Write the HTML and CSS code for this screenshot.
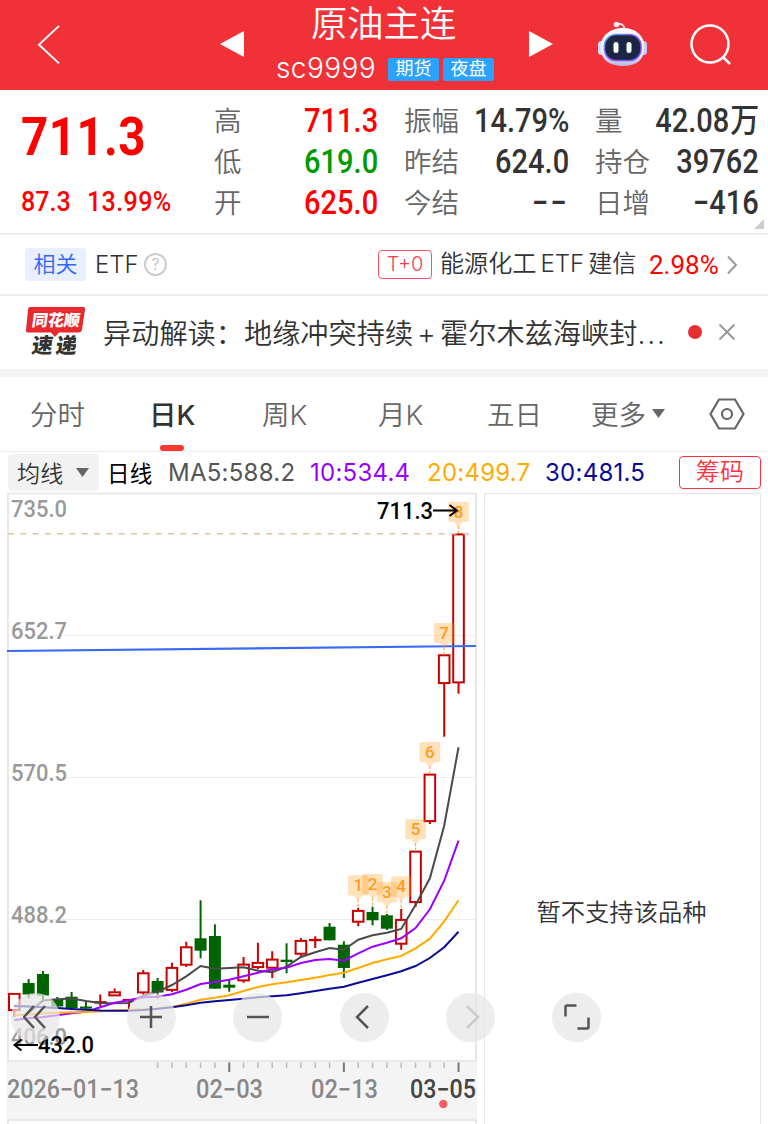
FILE: index.html
```html
<!DOCTYPE html>
<html lang="zh-CN">
<head>
<meta charset="utf-8">
<title>原油主连</title>
<link rel="stylesheet" href="styles.css">
</head>
<body>
<!-- top bar -->
<div class="header">
  <svg class="back" width="24" height="42" viewBox="0 0 24 42"><path d="M22 2 L2 21.500 L22 41" transform="scale(1 .96)"/></svg>
  <svg class="prev" width="24" height="26" viewBox="0 0 24 26"><path d="M0 13 L24 0 V26 Z"/></svg>
  <div class="title">
    <h1>原油主连</h1>
    <div class="code"><span class="sym">sc9999</span><span class="tag">期货</span><span class="tag">夜盘</span></div>
  </div>
  <svg class="next" width="24" height="26" viewBox="0 0 24 26"><path d="M0 0 L24 13 L0 26 Z"/></svg>
  <svg class="robot" width="50" height="46" viewBox="0 0 50 46">
    <defs>
      <linearGradient id="head" x1="0" y1="0" x2="0" y2="1"><stop offset="0" stop-color="#fff"/><stop offset=".7" stop-color="#e6e6f8"/><stop offset="1" stop-color="#b8b8e0"/></linearGradient>
      <linearGradient id="rim" x1="0" y1="0" x2="1" y2="1"><stop offset="0" stop-color="#55b8e8"/><stop offset=".5" stop-color="#8d4df0"/><stop offset="1" stop-color="#6a58ff"/></linearGradient>
    </defs>
    <path d="M18.500 3.500 C23 2 26 3.500 26.500 8" fill="none" stroke="#f3efff" stroke-width="1.800"/>
    <circle cx="18.500" cy="3.500" r="2.800" fill="#f4e6f0"/>
    <rect x="0" y="20" width="7" height="14" rx="3.500" fill="#dcdcf6"/>
    <rect x="42" y="20" width="7" height="14" rx="3.500" fill="#c9c9ee"/>
    <path d="M25 7 C38 7 46.500 15 46.500 26 C46.500 39 38 45 25 45 C12 45 2.500 39 2.500 26 C2.500 15 12 7 25 7 Z" fill="url(#head)"/>
    <rect x="6.500" y="13.500" width="36.500" height="26" rx="11.500" fill="#1d2544" stroke="url(#rim)" stroke-width="1.500"/>
    <rect x="15.500" y="21" width="5" height="11" rx="2.500" fill="#fff"/>
    <rect x="28.500" y="21" width="5" height="11" rx="2.500" fill="#fff"/>
  </svg>
  <svg class="search" width="42" height="42" viewBox="0 0 42 42"><circle cx="20" cy="20" r="18.500"/><path d="M33.500 33.500 L40 40"/></svg>
</div>

<!-- quote -->
<div class="quote">
  <div class="price">
    <div class="last"><span class="din">711.3</span></div>
    <div class="change"><span class="din">87.3</span><span class="din">13.99%</span></div>
  </div>
  <div class="stats">
    <div class="cell"><label>高</label><b class="din up">711.3</b></div>
    <div class="cell"><label>振幅</label><b class="din">14.79%</b></div>
    <div class="cell"><label>量</label><b class="din">42.08<i>万</i></b></div>
    <div class="cell"><label>低</label><b class="din down">619.0</b></div>
    <div class="cell"><label>昨结</label><b class="din">624.0</b></div>
    <div class="cell"><label>持仓</label><b class="din">39762</b></div>
    <div class="cell"><label>开</label><b class="din up">625.0</b></div>
    <div class="cell"><label>今结</label><b class="din dash">−−</b></div>
    <div class="cell"><label>日增</label><b class="din">−416</b></div>
  </div>
  <div class="corner"></div>
</div>

<!-- related ETF -->
<div class="etf">
  <span class="rel">相关</span>
  <span class="etf-label">ETF</span>
  <span class="help">?</span>
  <span class="t0">T+0</span>
  <span class="etf-name">能源化工<em>ETF</em>建信</span>
  <span class="etf-pct">2.98%</span>
  <svg width="12" height="20" viewBox="0 0 12 20"><path d="M2 1.500 L10 10 L2 18.500"/></svg>
</div>

<!-- news strip -->
<div class="news">
  <div class="logo">
    <svg width="62" height="32" viewBox="0 0 62 32"><path d="M5 1 H58 Q60.500 1 60 3.500 L57 23.500 Q56.500 26.500 53.500 26.500 H34 L30 31 L26 26.500 H3 Q.5 26.500 1 24 L3 3.500 Q3.300 1 5 1 Z"/></svg>
    <span class="logo-top">同花顺</span>
    <span class="logo-sub">速递</span>
  </div>
  <span class="news-text">异动解读：地缘冲突持续<em>+</em>霍尔木兹海峡封<u>...</u></span>
  <span class="dot"></span>
  <svg class="x" width="18" height="18" viewBox="0 0 18 18"><path d="M1.500 1.500 L16.500 16.500 M16.500 1.500 L1.500 16.500"/></svg>
</div>

<div class="tabs">
  <span>分时</span>
  <span class="active">日K</span>
  <span>周K</span>
  <span>月K</span>
  <span>五日</span>
  <span>更多<svg width="13" height="10" viewBox="0 0 13 10"><path d="M0 0 H13 L6.500 9 Z"/></svg></span>
  <svg class="gear" width="36" height="32" viewBox="0 0 36 32"><path d="M10 1.500 H26 L34.500 16 L26 30.500 H10 L1.500 16 Z"/><circle cx="18" cy="16" r="5"/></svg>
</div>

<div class="ma">
  <span class="pick">均线<svg width="13" height="9" viewBox="0 0 13 9"><path d="M0 0 H13 L6.500 9 Z"/></svg></span>
  <span class="day">日线</span>
  <span class="m5">MA5:588.2</span>
  <span class="m10">10:534.4</span>
  <span class="m20">20:499.7</span>
  <span class="m30">30:481.5</span>
  <span class="chip">筹码</span>
</div>

<div class="main">
  <svg id="chart" width="484" height="632" viewBox="0 492 484 632"></svg>
  <div class="side">暂不支持该品种</div>
  <div class="tools">
    <span><svg width="24" height="24" viewBox="0 0 24 24"><path d="M11 1 L1 12 L11 23 M22 1 L12 12 L22 23"/></svg></span>
    <span><svg width="24" height="24" viewBox="0 0 24 24"><path d="M1 12 H23 M12 1 V23"/></svg></span>
    <span><svg width="24" height="24" viewBox="0 0 24 24"><path d="M1 12 H23"/></svg></span>
    <span><svg width="24" height="24" viewBox="0 0 24 24"><path d="M16 1 L5 12 L16 23"/></svg></span>
    <span class="off"><svg width="24" height="24" viewBox="0 0 24 24"><path d="M8 1 L19 12 L8 23"/></svg></span>
    <span><svg width="26" height="26" viewBox="0 0 26 26"><path d="M1.500 12.500 V3 Q1.500 1.500 3 1.500 H12.500 M24.500 13.500 V23 Q24.500 24.500 23 24.500 H13.500"/></svg></span>
  </div>
</div>

<script>
var svg = document.getElementById("chart");
var out = "";
function px(i) { return 14.3 + i * 14.33; }

// color, high, body top, body bottom, low
var k = [
  ["r",993,993.3,1010.7,1016.7],["g",979,983,994.5,998],["g",971,974,995.5,1001.5],["g",997,999,1006.5,1008],
  ["g",992,996.7,1008,1008],["g",1001,1006.5,1008.7,1009.7],["r",994.5,1001.5,1003,1006.5],["r",988.5,991.7,996,996],
  ["r",999,999.3,1001,1011],["r",970,972.7,993,994.5],["g",978,981,992.5,998.5],["r",962.7,967.3,990.5,992],
  ["r",941.7,946.7,965.3,967],["g",900.3,938.3,950.7,958.3],["g",924.3,936,988.7,988.7],["g",979.3,984.7,987.7,991.7],
  ["r",957,964,981,982.7],["r",942.7,962.3,967.7,969.3],["r",951.3,959,968.3,978],["g",943.3,959.7,962,973.3],
  ["r",938,940.3,954.3,957.7],["r",936.3,939.3,940.7,948],["g",923,926.7,940.3,940.3],["g",941.3,944.7,968,978],
  ["r",907.7,910.3,922.3,926.3],["g",906.7,912,920.3,925.3],["g",914,915.3,928.7,930],["r",909,919.3,944.3,949.7],
  ["r",851,851,902.7,907],["r",774,774,821.7,824],["r",654.7,654.7,683.7,736.7],["r",533.3,533.8,683,693.7]
];
var ma = [
  ["#4a4a4a", [null,1013,1000.5,999.3,998.5,1001,1003,1003.3,1003,995.7,991.7,985,976.3,966,968.7,968,967.3,970.7,972.3,966.7,957,952.3,948,949.7,939.7,935.3,932.7,929,905,878.3,825.7,747.3]],
  ["#9b00ff", [1020,1018.3,1017,1015.3,1013.3,1011.7,1007.3,1002.7,1000.3,997.3,996.7,994.3,989.7,984,982,979.7,976.3,972.7,969.3,967.7,963,960,959,960.7,953.3,946.7,942.7,938.3,928,909.3,880.7,840.7]],
  ["#ffab00", [1015.3,1014.5,1013.5,1012.7,1012.3,1012,1011.3,1010.6,1010,1009.5,1008.7,1007,1003.7,999.7,997.7,995.3,991,987,984.3,982.3,980,977.7,975,972.7,968,963,959.3,956,948.3,938.7,921.3,900.3]],
  ["#0a0a96", [1006,1006.5,1007.3,1008,1009,1009.7,1010.5,1010.7,1010.7,1010,1008.7,1007.3,1005.3,1002.7,1001.3,1000,998.7,997.3,996.3,995.3,993.3,991,988.7,986.7,982.7,979,975.3,971.3,966,958,947.3,931.7]]
];
// label, candle index, top of the flag
var flags = [["1",24,875.3],["2",25,874],["3",26,882],["4",27,876.3],["5",28,819],["6",29,742],["7",30,623],["8",31,501.7]];

// frame, grid and date axis
out += '<rect class="axis" x="7" y="1062" width="470" height="57"/>';
out += '<path class="grid" d="M8 635.500 H476 M8 777.500 H476 M8 919.500 H476"/>';
out += '<path class="frame" d="M8 493.500 H476 V1061 H8 Z M7 1120 H476 V1124 M8 1120 V1124"/>';

function label(t, x, y, w, cls) {
  out += '<text class="' + cls + '" x="' + x + '" y="' + y + '" textLength="' + w + '" lengthAdjust="spacingAndGlyphs">' + t + '</text>';
}
label("735.0", 11, 517, 56, "lab");
label("652.7", 11, 639, 56, "lab");
label("570.5", 11, 781, 56, "lab");
label("488.2", 11, 923, 56, "lab");
label("406.0", 11, 1045, 56, "lab");

k.forEach(function (c, i) {
  var x = px(i), h = c[3] - c[2];
  if (c[0] == "g") {
    out += '<rect class="g" x="' + (x - 6) + '" y="' + c[2] + '" width="12" height="' + h + '"/>';
    out += '<path class="gw" d="M' + x + ' ' + c[1] + ' V' + c[4] + '"/>';
  } else {
    out += '<path class="rw" d="M' + x + ' ' + c[1] + ' V' + c[2] + ' M' + x + ' ' + c[3] + ' V' + c[4] + '"/>';
    out += '<rect class="r" x="' + (x - 5.3) + '" y="' + (c[2] + .6) + '" width="10.600" height="' + Math.max(h - 1.2, .3) + '"/>';
  }
});
ma.forEach(function (m) {
  var p = "";
  m[1].forEach(function (y, i) { if (y !== null) p += px(i) + "," + y + " "; });
  out += '<polyline class="line" stroke="' + m[0] + '" points="' + p + '"/>';
});

out += '<path class="last-line" d="M8 533.800 H476"/>';
out += '<path class="trend" d="M7 651 L476 646"/>';
flags.forEach(function (f) {
  var x = px(f[1]), y = f[2];
  out += '<path class="flag" d="M' + (x - 8.3) + ' ' + y + ' h16.600 q2 0 2 2 v16.200 q0 2 -2 2 h-3.800 l-4.500 5 l-4.500 -5 h-3.800 q-2 0 -2 -2 v-16.200 q0 -2 2 -2 z"/>';
  out += '<path class="flag-tail" d="M' + x + ' ' + (y + 24) + ' v8"/>';
  out += '<text class="flag-no" x="' + x + '" y="' + (y + 16) + '">' + f[0] + '</text>';
});

label("711.3", 377, 519, 56, "mark");
out += '<path class="arrow" d="M433 510.500 H457 M449.500 505 L457 510.500 L449.500 516"/>';
label("432.0", 38, 1053, 56, "mark");
out += '<path class="arrow" d="M38 1045 H15 M21.500 1039.500 L14.500 1045 L21.500 1050.500"/>';

for (var i = 10; i < 32; i++) {
  var major = i == 15 || i == 23 || i == 31;
  out += '<path class="' + (major ? "tick major" : "tick") + '" d="M' + px(i) + ' 1062.500 v' + (major ? 9.5 : 5.5) + '"/>';
}
label("2026−01−13", 7, 1098, 132, "lab date");
label("02−03", 196, 1098, 67, "lab date");
label("02−13", 311, 1098, 67, "lab date");
label("03−05", 410, 1098, 66, "lab date now");
out += '<circle cx="443.300" cy="1104" r="4.200" fill="#f35f63"/>';
svg.innerHTML = out;
</script>
</body>
</html>
```
FILE: styles.css
```css
* {
  box-sizing: border-box;
}

body {
  margin: 0;
  width: 768px;
  height: 1124px;
  overflow: hidden;
  background: #fff;
  color: #333;
  font-family: Inter, "Noto Sans CJK SC", sans-serif;
}

svg {
  display: block;
  fill: none;
  flex: none;
}

em, i, u {
  font-style: normal;
  text-decoration: none;
}

/* header */
.header {
  height: 90px;
  background: #f03238;
  display: flex;
  align-items: center;
  color: #fff;
}
.back {
  margin-left: 37px;
  stroke: #fff;
  stroke-width: 2;
}
.prev, .next {
  fill: #fff;
  margin-bottom: 3px;
}
.prev {
  margin-left: 159px;
}
.next {
  margin-left: 35px;
}
.title {
  width: 217px;
  height: 90px;
  margin-left: 33px;
}
h1 {
  margin: 0 0 0 34px;
  font-size: 36.300px;
  line-height: 48px;
  font-weight: 350;
  white-space: nowrap;
}
.code {
  display: flex;
  align-items: center;
  height: 42px;
}
.sym {
  font-size: 28px;
  font-weight: 350;
  letter-spacing: .4px;
  line-height: 38px;
  margin: -2px 0 0 -1px;
  width: 111px;
  flex: none;
}
.tag {
  width: 51px;
  height: 23px;
  margin-right: 4px;
  border-radius: 2px;
  background: #2ba2ff;
  font-size: 18px;
  line-height: 22px;
  text-align: center;
  flex: none;
}
.code .tag:nth-child(2) {
  margin-left: 1px;
}
.robot {
  margin-left: 45px;
  margin-bottom: 3px;
}
.search {
  margin-left: 42px;
  stroke: #fff;
  stroke-width: 2.500;
}

/* quote */
.din {
  display: inline-block;
  font-family: Roboto, "Noto Sans CJK SC", sans-serif;
  font-weight: 500;
  transform: scaleX(.88);
  transform-origin: right;
  white-space: nowrap;
}
.quote {
  height: 145px;
  border-bottom: 2px solid #eee;
  display: flex;
  position: relative;
}
.price {
  width: 214px;
  padding: 14px 0 0 21px;
  color: #f00;
}
.price .din {
  transform-origin: left;
}
.last {
  font-size: 54px;
  line-height: 64px;
}
.last .din {
  font-weight: 700;
  letter-spacing: .5px;
}
.change {
  display: flex;
  font-size: 28.500px;
  line-height: 33px;
  margin-top: 16px;
}
.change .din:first-child {
  width: 66px;
}
.change .din:last-child {
  letter-spacing: .4px;
}
.stats {
  display: grid;
  grid-template-columns: 164px 165px 164px;
  grid-auto-rows: 41px;
  column-gap: 26px;
  padding-top: 11px;
}
.cell {
  display: flex;
  justify-content: space-between;
  align-items: center;
  font-size: 33px;
  line-height: 41px;
}
.cell label {
  font-size: 27.500px;
  color: #666;
  font-weight: 350;
  white-space: nowrap;
}
.cell b {
  margin-top: -2px;
}
.cell i {
  font-size: 33px;
  display: inline-block;
  line-height: 30px;
  margin-left: 1px;
}
.cell .dash {
  letter-spacing: 2.500px;
}
.up {
  color: #f00;
}
.down {
  color: #090;
}
.corner {
  position: absolute;
  right: 4px;
  bottom: 4px;
  border-left: 10px solid transparent;
  border-bottom: 10px solid #ccc;
}

/* etf */
.etf {
  height: 61px;
  border-bottom: 2px solid #eee;
  display: flex;
  align-items: center;
  padding-left: 25px;
  font-weight: 350;
}
.rel {
  width: 61px;
  height: 33px;
  border-radius: 4px;
  background: #e8efff;
  color: #36f;
  font-size: 22px;
  line-height: 32px;
  text-align: center;
}
.etf-label {
  margin-left: 9px;
  width: 49px;
  font-size: 24px;
}
.help {
  width: 23px;
  height: 23px;
  border: 2px solid #ccc;
  border-radius: 50%;
  color: #bbb;
  font-size: 16px;
  line-height: 19px;
  text-align: center;
}
.t0 {
  width: 54px;
  height: 29px;
  margin-left: 211px;
  border: 1px solid #fa5064;
  border-radius: 4px;
  color: #f73c52;
  font-size: 20px;
  line-height: 27px;
  text-align: center;
}
.etf-name {
  width: 209px;
  margin-left: 8px;
  font-size: 24.100px;
  line-height: 34px;
  margin-top: -2px;
  white-space: nowrap;
}
.etf-name em {
  margin: 0 4px;
}
.etf-pct {
  width: 77px;
  color: #f00;
  font-family: Roboto, sans-serif;
  font-weight: 400;
  font-size: 26px;
}
.etf svg {
  stroke: #999;
  stroke-width: 2;
}

/* news */
.news {
  height: 81px;
  border-bottom: 8px solid #f4f4f4;
  display: flex;
  align-items: center;
}
.logo {
  position: relative;
  width: 62px;
  height: 54px;
  margin: 0 16px 0 25px;
  font-weight: 900;
}
.logo svg {
  fill: #e8292e;
}
.logo-top, .logo-sub {
  position: absolute;
  transform: skewX(-8deg);
  white-space: nowrap;
}
.logo-top {
  left: 7px;
  top: 2px;
  font-size: 16px;
  line-height: 24px;
  color: #fff;
}
.logo-sub {
  left: 7px;
  top: 28px;
  font-size: 21px;
  line-height: 24px;
  letter-spacing: 3px;
}
.news-text {
  width: 585px;
  margin-top: -2px;
  font-size: 28.200px;
  font-weight: 350;
  white-space: nowrap;
}
.news-text em {
  display: inline-block;
  width: 27px;
  text-align: center;
}
.news-text u {
  letter-spacing: 1.800px;
}
.dot {
  width: 14px;
  height: 14px;
  border-radius: 50%;
  background: #e83034;
  margin-top: -2px;
}
.x {
  margin: -2px 0 0 16px;
  stroke: #999;
  stroke-width: 2;
}

/* tabs */
.tabs {
  height: 75px;
  border-bottom: 1px solid #e9e9e9;
  display: grid;
  grid-template-columns: 119px 113px 116px 109px 104px 118px 40px;
  align-items: center;
  padding-left: 30px;
  font-size: 27.500px;
  font-weight: 350;
  color: #666;
}
.tabs span {
  display: flex;
  align-items: center;
  height: 74px;
  padding-bottom: 2px;
  white-space: nowrap;
}
.tabs span svg {
  fill: #666;
  margin-left: 6px;
  margin-top: 2px;
}
.tabs .active {
  position: relative;
  font-weight: 500;
  color: #333;
}
.tabs .active::after {
  content: "";
  position: absolute;
  left: 11px;
  bottom: 0;
  width: 24px;
  height: 6px;
  border-radius: 3px;
  background: #fa3830;
}
.gear {
  stroke: #666;
  stroke-width: 2.200;
}

/* ma row */
.ma {
  height: 40px;
  display: grid;
  grid-template-columns: 99px 61px 142px 117px 118px 134px 82px;
  align-items: center;
  padding-left: 8px;
  font-size: 24px;
  letter-spacing: .25px;
  white-space: nowrap;
}
.pick {
  width: 91px;
  height: 37px;
  border-radius: 4px;
  background: #f2f2f2;
  display: flex;
  align-items: center;
  padding-left: 9px;
  font-size: 23px;
  font-weight: 350;
}
.pick svg {
  margin-left: 12px;
  fill: #666;
}
.day {
  font-size: 22.500px;
  color: #000;
}
.m5 { color: #555; }
.m10 { color: #9b00ff; }
.m20 { color: #ffab00; }
.m30 { color: #0a0a96; }
.chip {
  height: 33px;
  border: 1px solid #ff3040;
  border-radius: 4px;
  color: #ff3040;
  font-size: 24px;
  font-weight: 350;
  line-height: 30px;
  text-align: center;
}

/* chart */
.main {
  display: flex;
  position: relative;
  height: 632px;
}
.side {
  width: 277px;
  margin-top: 1px;
  padding: 401px 2px 0 0;
  border: 1px solid #e6e6e6;
  border-bottom: 0;
  text-align: center;
  font-size: 24.300px;
  font-weight: 350;
  line-height: 34px;
}
.axis { fill: #f4f4f4; }
.grid { stroke: #eee; }
.frame { stroke: #e8e8e8; stroke-width: 2; }
.lab, .mark, .flag-no {
  font-family: Roboto, sans-serif;
  font-size: 23.500px;
  font-weight: 500;
}
.lab { fill: #999; }
.date { fill: #888; font-size: 25px; }
.now { fill: #444; }
.mark { fill: #000; }
.r { fill: none; stroke: #c80000; stroke-width: 2; }
.rw { stroke: #c80000; stroke-width: 2; }
.g { fill: #006400; }
.gw { stroke: #006400; stroke-width: 2; }
.line { stroke-width: 2; }
.last-line { stroke: #dfc49c; stroke-width: 1.500; stroke-dasharray: 6 6.300; }
.trend { stroke: #3a6af5; stroke-width: 2.200; }
.flag { fill: #ff9c1a; fill-opacity: .3; }
.flag-tail { stroke: #f7b155; stroke-width: 1.200; stroke-dasharray: 3 1.500; }
.flag-no { fill: #ff9c1a; font-size: 17px; text-anchor: middle; }
.arrow { stroke: #000; stroke-width: 2; }
.tick { stroke: #bbb; stroke-width: 1.500; }
.major { stroke: #777; stroke-width: 2; }

/* round buttons over the chart */
.tools {
  position: absolute;
  left: 10.500px;
  top: 500.500px;
  display: flex;
  gap: 57.400px;
}
.tools span {
  width: 49px;
  height: 49px;
  border-radius: 50%;
  background: rgba(229, 229, 229, .7);
  display: flex;
  align-items: center;
  justify-content: center;
}
.tools span:first-child {
  margin-right: 10px;
}
.tools svg {
  stroke: #555;
  stroke-width: 2.500;
}
.tools .off svg {
  stroke: #ccc;
}
```
